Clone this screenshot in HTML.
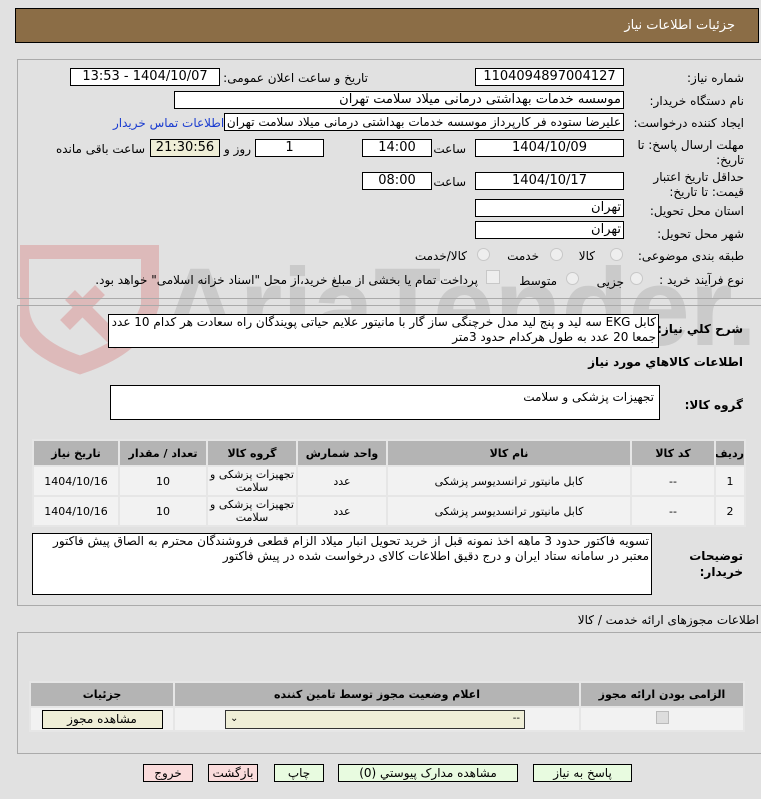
<!DOCTYPE html>
<html><head><meta charset="utf-8"><style>
body{margin:0;width:761px;height:799px;background:#e1e1e1;font-family:Tahoma,"DejaVu Sans","Liberation Sans",sans-serif;font-size:12px;color:#000;position:relative;overflow:hidden}
.a{position:absolute}
.l{position:absolute;direction:rtl;white-space:nowrap;font-size:12px}
.in{position:absolute;background:#fff;border:1px solid #000;box-sizing:border-box;height:18px;line-height:16px;font-size:13px;text-align:center;direction:rtl;white-space:nowrap;overflow:hidden}
.p{position:absolute;border:1px solid #aaa;border-right:none;box-sizing:border-box}
table{border-collapse:collapse;position:absolute;font-size:11px;direction:rtl;table-layout:fixed}
td,th{border:2px solid #e6e6e6;text-align:center;padding:0;line-height:13px;overflow:hidden}
th{background:#b4b4b4;font-weight:bold}
td{background:#f2f2f2}
.btn{position:absolute;border:1px solid #000;box-sizing:border-box;height:18px;line-height:16px;text-align:center;font-size:12px;direction:rtl}
.rad{position:absolute;width:11px;height:11px;border-radius:50%;border:1px solid #c8c8c8;background:#eee}
</style></head><body>
<!-- watermark -->
<svg class="a" style="left:20px;top:245px" width="740" height="130">
<path d="M20 5 L130 5 L130 60 Q120 100 60 120 Q0 100 0 60 L0 5Z" fill="none" stroke="#dba0a0" stroke-width="18" opacity=".6"/>
<path d="M50 50 L100 100 M45 80 L80 45" stroke="#dba0a0" stroke-width="14" opacity=".6"/>
<text x="140" y="100" font-size="110" font-weight="bold" font-family="Liberation Sans" fill="#b8b8b8" opacity=".55">AriaTender.net</text>
</svg>
<div class="a" style="left:15px;top:8px;width:744px;height:35px;background:#8b6d46;border:1px solid #000;box-sizing:border-box"></div>
<div class="l" style="right:26px;top:18px;color:#fff;font-size:13px">جزئیات اطلاعات نیاز</div>
<div class="p" style="left:17px;top:59px;width:744px;height:240px"></div>
<div class="p" style="left:17px;top:305px;width:744px;height:301px"></div>

<div class="l" style="right:17px;top:71px">شماره نیاز:</div>
<div class="in" style="left:475px;top:68px;width:149px">1104094897004127</div>
<div class="l" style="right:393px;top:71px">تاریخ و ساعت اعلان عمومی:</div>
<div class="in" style="left:70px;top:68px;width:150px">1404/10/07 - 13:53</div>

<div class="l" style="right:17px;top:94px">نام دستگاه خریدار:</div>
<div class="in" style="left:174px;top:91px;width:450px;text-align:right;padding-right:2px">موسسه خدمات بهداشتی درمانی میلاد سلامت تهران</div>

<div class="l" style="right:17px;top:116px">ایجاد کننده درخواست:</div>
<div class="in" style="left:224px;top:113px;width:400px;text-align:right;padding-right:2px;font-size:12px">علیرضا ستوده فر کارپرداز موسسه خدمات بهداشتی درمانی میلاد سلامت تهران</div>
<div class="l" style="left:113px;top:116px;color:#1a3cd0">اطلاعات تماس خریدار</div>

<div class="l" style="right:17px;top:138px;line-height:15px;white-space:normal;width:110px">مهلت ارسال پاسخ: تا تاریخ:</div>
<div class="in" style="left:475px;top:139px;width:149px">1404/10/09</div>
<div class="l" style="right:295px;top:142px">ساعت</div>
<div class="in" style="left:362px;top:139px;width:70px">14:00</div>
<div class="in" style="left:255px;top:139px;width:69px">1</div>
<div class="l" style="right:510px;top:142px">روز و</div>
<div class="in" style="left:150px;top:139px;width:70px;background:#efeed7">21:30:56</div>
<div class="l" style="right:616px;top:142px">ساعت باقی مانده</div>

<div class="l" style="right:17px;top:170px;line-height:15px;white-space:normal;width:110px">حداقل تاریخ اعتبار قیمت: تا تاریخ:</div>
<div class="in" style="left:475px;top:172px;width:149px">1404/10/17</div>
<div class="l" style="right:295px;top:175px">ساعت</div>
<div class="in" style="left:362px;top:172px;width:70px">08:00</div>

<div class="l" style="right:17px;top:204px">استان محل تحویل:</div>
<div class="in" style="left:475px;top:199px;width:149px;text-align:right;padding-right:2px">تهران</div>
<div class="l" style="right:17px;top:227px">شهر محل تحویل:</div>
<div class="in" style="left:475px;top:221px;width:149px;text-align:right;padding-right:2px">تهران</div>

<div class="l" style="right:17px;top:249px">طبقه بندی موضوعی:</div>
<div class="rad" style="left:610px;top:248px"></div><div class="l" style="right:166px;top:249px">کالا</div>
<div class="rad" style="left:550px;top:248px"></div><div class="l" style="right:222px;top:249px">خدمت</div>
<div class="rad" style="left:477px;top:248px"></div><div class="l" style="right:294px;top:249px">کالا/خدمت</div>

<div class="l" style="right:17px;top:273px">نوع فرآیند خرید :</div>
<div class="rad" style="left:630px;top:272px"></div><div class="l" style="right:137px;top:275px">جزیی</div>
<div class="rad" style="left:566px;top:272px"></div><div class="l" style="right:204px;top:274px">متوسط</div>
<div class="a" style="left:486px;top:270px;width:12px;height:12px;border:1px solid #c8c8c8;background:#eee"></div>
<div class="l" style="right:283px;top:273px">پرداخت تمام یا بخشی از مبلغ خرید،از محل "اسناد خزانه اسلامی" خواهد بود.</div>

<div class="l" style="right:18px;top:322px;font-weight:bold">شرح کلي نياز:</div>
<div class="in" style="left:108px;top:314px;width:551px;height:34px;text-align:right;padding-right:2px;white-space:normal;line-height:15px;font-size:12px">کابل EKG سه لید و پنج لید مدل خرچنگی ساز گار با مانیتور علایم حیاتی پویندگان راه سعادت هر کدام 10 عدد جمعا 20 عدد به طول هرکدام حدود 3متر</div>
<div class="l" style="right:18px;top:355px;font-weight:bold">اطلاعات کالاهاي مورد نياز</div>
<div class="l" style="right:18px;top:398px;font-weight:bold">گروه کالا:</div>
<div class="in" style="left:110px;top:385px;width:550px;height:35px;text-align:right;padding-right:5px;padding-top:3px;font-size:12px">تجهیزات پزشکی و سلامت</div>

<table style="left:32px;top:439px;width:714px">
<tr style="height:26px"><th style="width:28px">ردیف</th><th style="width:82px">کد کالا</th><th style="width:242px">نام کالا</th><th style="width:88px">واحد شمارش</th><th style="width:88px">گروه کالا</th><th style="width:86px">تعداد / مقدار</th><th>تاریخ نیاز</th></tr>
<tr style="height:30px"><td>1</td><td>--</td><td>کابل مانیتور ترانسدیوسر پزشکی</td><td>عدد</td><td>تجهیزات پزشکی و سلامت</td><td>10</td><td>1404/10/16</td></tr>
<tr style="height:30px"><td>2</td><td>--</td><td>کابل مانیتور ترانسدیوسر پزشکی</td><td>عدد</td><td>تجهیزات پزشکی و سلامت</td><td>10</td><td>1404/10/16</td></tr>
</table>

<div class="l" style="right:18px;top:548px;font-weight:bold;line-height:16px;white-space:normal;width:60px">توضیحات خریدار:</div>
<div class="in" style="left:32px;top:533px;width:620px;height:62px;text-align:right;padding-right:2px;white-space:normal;line-height:15px;font-size:12px">تسویه فاکتور حدود 3 ماهه اخذ نمونه قبل از خرید تحویل انبار میلاد الزام قطعی فروشندگان محترم به الصاق پیش فاکتور معتبر در سامانه ستاد ایران و درج دقیق اطلاعات کالای درخواست شده در پیش فاکتور</div>

<div class="l" style="right:2px;top:613px">اطلاعات مجوزهای ارائه خدمت / کالا</div>
<div class="p" style="left:17px;top:632px;width:744px;height:122px"></div>
<table style="left:29px;top:681px;width:716px">
<tr style="height:25px"><th style="width:162px">الزامی بودن ارائه مجوز</th><th style="width:404px">اعلام وضعیت مجوز توسط تامین کننده</th><th>جزئیات</th></tr>
<tr style="height:24px"><td><span style="display:inline-block;width:11px;height:11px;border:1px solid #bbb;background:#ddd"></span></td><td><div style="margin:0 auto 0 50px;width:298px;height:17px;border:1px solid #333;background:#efeed7;text-align:right;direction:ltr;font-size:10px;line-height:16px;position:relative"><span style="position:absolute;left:4px">⌄</span><span style="position:absolute;right:4px">--</span></div></td><td><div style="margin:0 auto;width:119px;height:17px;border:1px solid #000;background:#efeed7;line-height:16px;font-size:12px">مشاهده مجوز</div></td></tr>
</table>

<div class="btn" style="left:533px;top:764px;width:99px;background:#e8fbe0">پاسخ به نیاز</div>
<div class="btn" style="left:338px;top:764px;width:180px;background:#e8fbe0">مشاهده مدارک پیوستي (0)</div>
<div class="btn" style="left:274px;top:764px;width:50px;background:#e8fbe0">چاپ</div>
<div class="btn" style="left:208px;top:764px;width:50px;background:#fadcdc">بازگشت</div>
<div class="btn" style="left:143px;top:764px;width:50px;background:#fadcdc">خروج</div>
</body></html>
